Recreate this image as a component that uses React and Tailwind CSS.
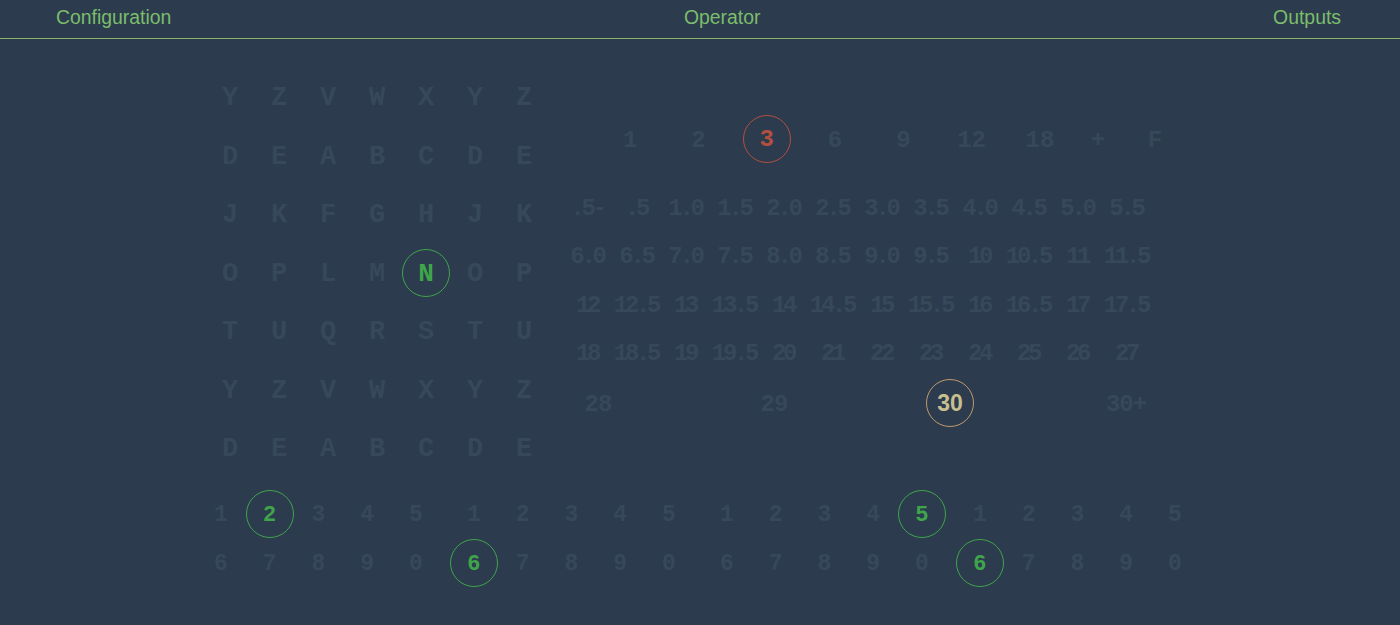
const mono = { fontFamily: '"Liberation Mono", "DejaVu Sans Mono", monospace' };
const sans = { fontFamily: '"Liberation Sans", Arial, sans-serif' };

const dim = "pt-[3px] text-[#37485b]";

const letters = [
    "YZVWXYZ",
    "DEABCDE",
    "JKFGHJK",
    "OPLMNOP",
    "TUQRSTU",
    "YZVWXYZ",
    "DEABCDE",
];

const topRow = [
    { v: "1", w: "w-[68.3px]" },
    { v: "2", w: "w-[68.3px]" },
    { v: "3", w: "w-[68.3px]", hl: "red" },
    { v: "6", w: "w-[68.3px]" },
    { v: "9", w: "w-[68.3px]" },
    { v: "12", w: "w-[68.3px]" },
    { v: "18", w: "w-[68.3px]" },
    { v: "+", w: "w-[47.8px]" },
    { v: "F", w: "w-[66px]" },
];

const decRows = [
    [".5-", ".5", "1.0", "1.5", "2.0", "2.5", "3.0", "3.5", "4.0", "4.5", "5.0", "5.5"],
    ["6.0", "6.5", "7.0", "7.5", "8.0", "8.5", "9.0", "9.5", "10", "10.5", "11", "11.5"],
    ["12", "12.5", "13", "13.5", "14", "14.5", "15", "15.5", "16", "16.5", "17", "17.5"],
    ["18", "18.5", "19", "19.5", "20", "21", "22", "23", "24", "25", "26", "27"],
];

const lastRow = [{ v: "28" }, { v: "29" }, { v: "30", hl: "gold" }, { v: "30+" }];

// circled output digits, keyed row-group -> position in group
const bottomHl = {
    "0-0": 1,
    "1-1": 0,
    "0-2": 4,
    "1-3": 0,
};

const ring = {
    green: "border-[#3fa54a] text-[#3fa54a]",
    red: "border-[#b24f3f] text-[#b24f3f]",
    gold: "border-[#c09a6c] text-[#c8bf8e]",
};

function Ring({ color, children, font }) {
    return (
        <span
            className={`flex h-12 w-12 shrink-0 items-center justify-center rounded-full border-[1.5px] font-bold ${ring[color]}`}
            style={font}
        >
            {children}
        </span>
    );
}

export default function App() {
    return (
        <div className="h-[625px] w-full overflow-hidden bg-[#2c3b4e]">
            <header
                className="box-border flex h-[39px] items-center justify-between border-b border-[#8cb36b] pb-[2px] pl-14 pr-[59px] text-[19.4px] text-[#7bbd6b]"
                style={sans}
            >
                <span>Configuration</span>
                <span>Operator</span>
                <span>Outputs</span>
            </header>

            <main className="flex">
                {/* configuration letters */}
                <div className="ml-[205.5px] mt-[29px] grid w-[343px] grid-cols-7 text-[27px] font-bold leading-none" style={mono}>
                    {letters.map((row, r) =>
                        row.split("").map((ch, c) => (
                            <div key={`${r}-${c}`} className="flex h-[58.5px] items-center justify-center">
                                {r === 3 && c === 4 ? (
                                    <Ring color="green" font={mono}>
                                        <span className="pt-[2px] text-[26px]">{ch}</span>
                                    </Ring>
                                ) : (
                                    <span className={dim}>{ch}</span>
                                )}
                            </div>
                        ))
                    )}
                </div>

                {/* operator */}
                <div className="ml-[14px] mt-[29px] flex flex-col font-bold leading-none" style={mono}>
                    <div className="ml-[33.5px] mt-[47px] flex h-12 text-[24px]">
                        {topRow.map((t) => (
                            <div key={t.v} className={`flex shrink-0 items-center justify-center ${t.w}`}>
                                {t.hl ? (
                                    <Ring color={t.hl} font={mono}>
                                        <span className="pt-[2px]">{t.v}</span>
                                    </Ring>
                                ) : (
                                    <span className={dim}>{t.v}</span>
                                )}
                            </div>
                        ))}
                    </div>

                    <div className="mt-[19.75px] flex flex-col text-[24px] tracking-[-3.3px]">
                        {decRows.map((row, r) => (
                            <div key={r} className="flex h-[48.5px]">
                                {row.map((v, i) => (
                                    <div key={i} className="flex w-[49px] shrink-0 items-center justify-center whitespace-nowrap">
                                        <span className={dim}>{v}</span>
                                    </div>
                                ))}
                            </div>
                        ))}
                        <div className="ml-[-52.5px] mt-[2px] flex h-[48.5px] tracking-[-1px]">
                            {lastRow.map((t) => (
                                <div key={t.v} className="flex w-[176px] shrink-0 items-center justify-center">
                                    {t.hl ? (
                                        <Ring color={t.hl} font={sans}>
                                            <span className="text-[23px] tracking-normal">{t.v}</span>
                                        </Ring>
                                    ) : (
                                        <span className={dim}>{t.v}</span>
                                    )}
                                </div>
                            ))}
                        </div>
                    </div>
                </div>
            </main>

            {/* outputs */}
            <div className="ml-[196.6px] mt-[12px] flex flex-col text-[23px] font-bold leading-none" style={mono}>
                {["12345", "67890"].map((digits, r) => (
                    <div key={r} className="flex h-[49px] gap-[9.25px]">
                        {[0, 1, 2, 3].map((g) => (
                            <div key={g} className="flex">
                                {digits.split("").map((d, i) => (
                                    <div key={i} className="flex w-[48.75px] shrink-0 items-center justify-center">
                                        {bottomHl[`${r}-${g}`] === i ? (
                                            <Ring color="green" font={sans}>
                                                <span className="text-[22px]">{d}</span>
                                            </Ring>
                                        ) : (
                                            <span className={dim}>{d}</span>
                                        )}
                                    </div>
                                ))}
                            </div>
                        ))}
                    </div>
                ))}
            </div>
        </div>
    );
}
